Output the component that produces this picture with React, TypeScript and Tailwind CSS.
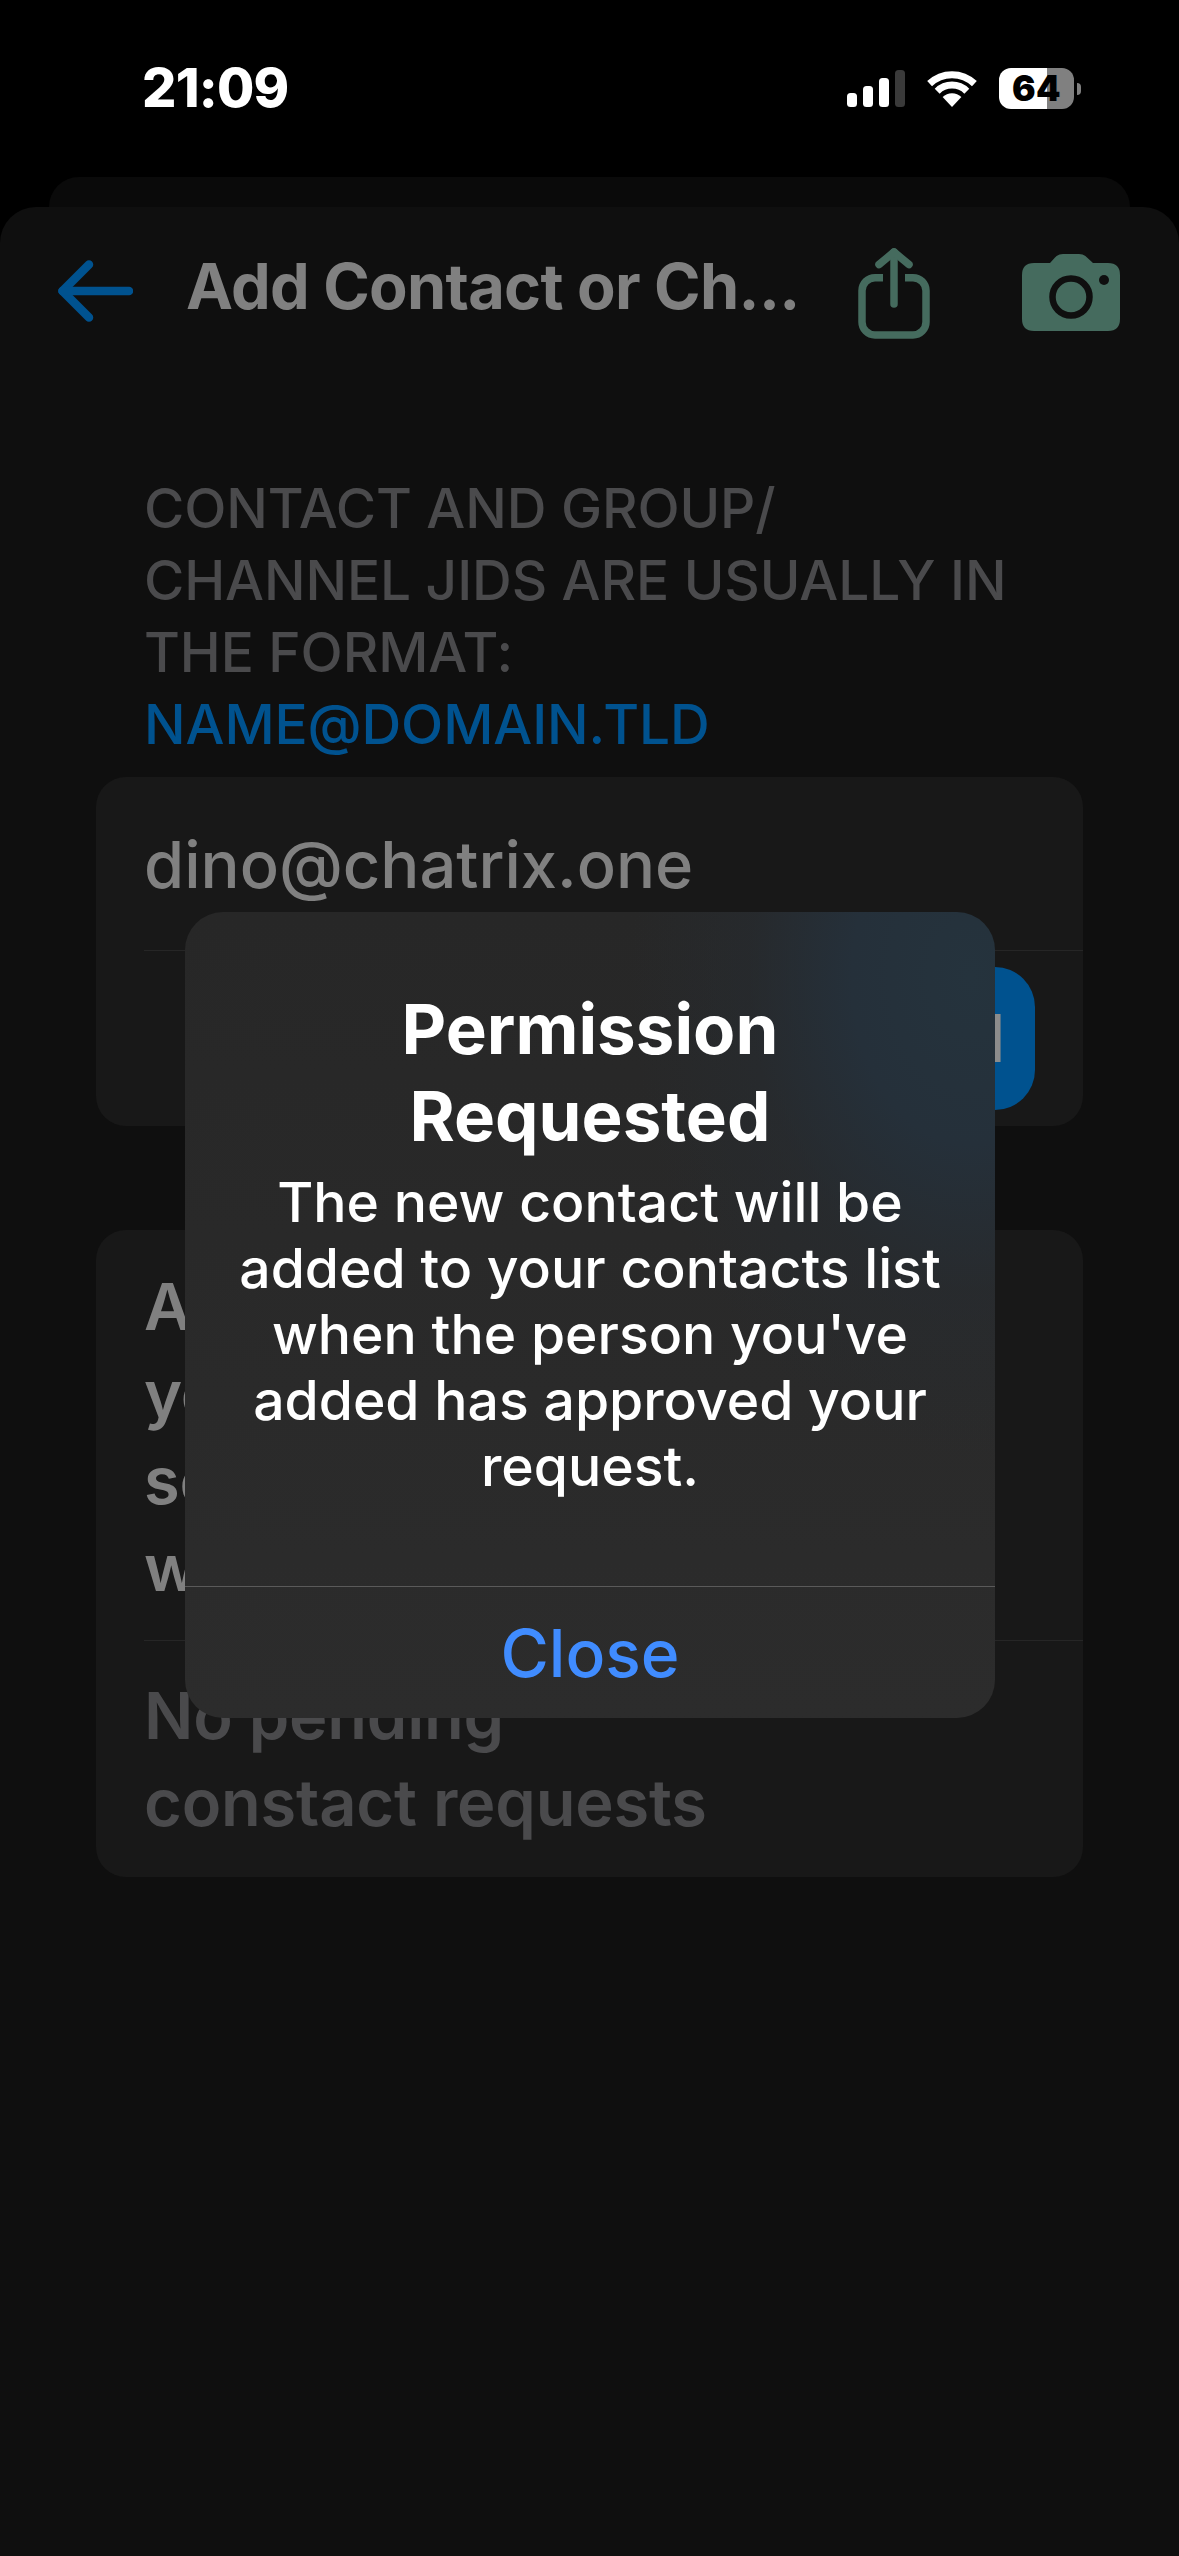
function Signal() {
  return (
    <svg width="58" height="37" viewBox="0 0 58 37" fill="none">
      <rect x="0" y="23" width="10" height="14" rx="3.5" fill="#fff" />
      <rect x="16" y="16" width="10" height="21" rx="3.5" fill="#fff" />
      <rect x="32" y="8" width="10" height="29" rx="3.5" fill="#fff" />
      <rect x="48" y="0" width="10" height="37" rx="3.5" fill="#3a3a3a" />
    </svg>
  );
}

function Wifi() {
  return (
    <svg width="50" height="37" viewBox="0 0 50 37" fill="none">
      <path d="M25 37 L15.6 27 A13.5 13.5 0 0 1 34.4 27 Z" fill="#fff" />
      <path d="M10.2 21.2 A21 21 0 0 1 39.8 21.2" stroke="#fff" strokeWidth="7" />
      <path d="M2.6 13.6 A32.5 32.5 0 0 1 47.4 13.6" stroke="#fff" strokeWidth="7" />
    </svg>
  );
}

function BackArrow() {
  return (
    <svg width="75" height="62" viewBox="0 0 75 62" fill="none" stroke="#00528f" strokeWidth="8.5" strokeLinecap="round" strokeLinejoin="round">
      <path d="M31 4.5 L4.5 31 L31 57.5" />
      <path d="M4.5 31 H71" />
    </svg>
  );
}

function ShareIcon() {
  return (
    <svg width="72" height="91" viewBox="0 0 72 91" fill="none" stroke="#456b5e" strokeWidth="7.5" strokeLinecap="round" strokeLinejoin="round">
      <path d="M25 29.7 H17 a13 13 0 0 0 -13 13 V74 a13 13 0 0 0 13 13 H55 a13 13 0 0 0 13 -13 V42.7 a13 13 0 0 0 -13 -13 H47" strokeLinecap="butt" />
      <path d="M36 4 V56" />
      <path d="M21 16.5 L36 4 L51 16.5" />
    </svg>
  );
}

function CameraIcon() {
  return (
    <svg width="98" height="77" viewBox="0 0 98 77" fill="none">
      <path
        d="M12 9 H28 L33 3.5 Q36 0 41 0 H57 Q62 0 65 3.5 L71 9 H86 Q98 9 98 21 V65 Q98 77 86 77 H12 Q0 77 0 65 V21 Q0 9 12 9 Z"
        fill="#456b5e"
      />
      <circle cx="49" cy="43" r="18.5" stroke="#0f0f0f" strokeWidth="6.5" />
      <circle cx="82" cy="26" r="5" fill="#0f0f0f" />
    </svg>
  );
}

export default function App() {
  return (
    <div className="relative min-h-[2556px] bg-black font-['Inter',sans-serif]">
      {/* status bar */}
      <div className="flex h-[177px] items-start justify-between pl-[142px] pr-[98px] pt-[56px]">
        <span className="text-[54px] leading-[63px] font-extrabold tracking-[-0.8px] text-white">21:09</span>
        <div className="flex items-center gap-[22px] pt-[12px]">
          <Signal />
          <Wifi />
          <div className="flex items-center gap-[3px]">
            <div className="flex h-[41px] w-[75px] items-center justify-center rounded-[12px] bg-[linear-gradient(90deg,#ffffff_64%,#808080_64%)] text-[35px] font-black tracking-[0.5px] text-black">
              64
            </div>
            <div className="h-[12px] w-[4px] rounded-r-full bg-[#808080]" />
          </div>
        </div>
      </div>

      {/* sheet peeking out behind */}
      <div className="mx-[49px] h-[30px] rounded-t-[30px] bg-[#0a0a0a]" />

      <div className="min-h-[2349px] rounded-t-[36px] bg-[#0f0f0f]">
        <div className="flex h-[168px] items-center pl-[58px]">
          <BackArrow />
          <h1 className="ml-[53px] -mt-[10px] w-[612px] text-[63px] font-bold tracking-[-0.7px] whitespace-nowrap text-[#808080]">Add Contact or Ch...</h1>
          <div className="ml-[60px] mt-[4px]">
            <ShareIcon />
          </div>
          <div className="ml-[92px] mt-[2px]">
            <CameraIcon />
          </div>
        </div>

        <div className="px-[96px] pt-[97px]">
          <div className="pl-[48px] text-[55px] leading-[72px] font-medium tracking-[-0.1px] text-[#4a4a4c]">
            <div>CONTACT AND GROUP/</div>
            <div>CHANNEL JIDS ARE USUALLY IN</div>
            <div>THE FORMAT:</div>
            <div className="text-[#00528f]">NAME@DOMAIN.TLD</div>
          </div>

          <div className="mt-[17px] rounded-[30px] bg-[#181818]">
            <div className="flex h-[173px] items-center pl-[48px] pt-[2px] text-[65px] font-medium text-[#808080]">dino@chatrix.one</div>
            <div className="ml-[48px] h-px bg-[#262626]" />
            <div className="flex h-[175px] items-center justify-end pr-[48px]">
              <div className="flex h-[143px] items-center rounded-[40px] bg-[#00528f] pl-[50px] pr-[30px] text-[66px] font-semibold text-[#8c8c8c]">
                Add
              </div>
            </div>
          </div>

          <div className="mt-[104px] rounded-[30px] bg-[#181818]">
            <div className="h-[410px] pl-[48px] pt-[33px] text-[65px] leading-[87px] font-semibold tracking-[-0.2px] text-[#808080]">
              <div>A</div>
              <div>yo</div>
              <div>se</div>
              <div>w</div>
            </div>
            <div className="ml-[48px] h-px bg-[#262626]" />
            <div className="h-[236px] pl-[48px] pt-[31px] text-[65px] leading-[87px] font-semibold tracking-[-0.2px] text-[#4a4a4c]">
              <div>No pending</div>
              <div>constact requests</div>
            </div>
          </div>
        </div>
      </div>

      {/* alert over the page */}
      <div className="absolute left-[185px] top-[912px] flex h-[806px] w-[810px] flex-col rounded-[38px] bg-[radial-gradient(ellipse_340px_480px_at_97%_8%,#25333d_0%,#25303a_35%,rgba(38,44,50,0.5)_65%,rgba(39,39,39,0)_100%),linear-gradient(180deg,#272727,#2c2c2c)]">
        <div className="flex-1 px-[30px] pt-[74px] text-center text-white">
          <div className="text-[69px] leading-[87px] font-bold">
            <div>Permission</div>
            <div>Requested</div>
          </div>
          <div className="mt-[9px] text-[55.3px] leading-[66px] font-medium">
            <div>The new contact will be</div>
            <div>added to your contacts list</div>
            <div>when the person you've</div>
            <div>added has approved your</div>
            <div>request.</div>
          </div>
        </div>
        <div className="h-px bg-[#5a5a5a]" />
        <div className="flex h-[131px] items-center justify-center pt-[2px] text-[66px] font-medium text-[#408cff]">Close</div>
      </div>
    </div>
  );
}
